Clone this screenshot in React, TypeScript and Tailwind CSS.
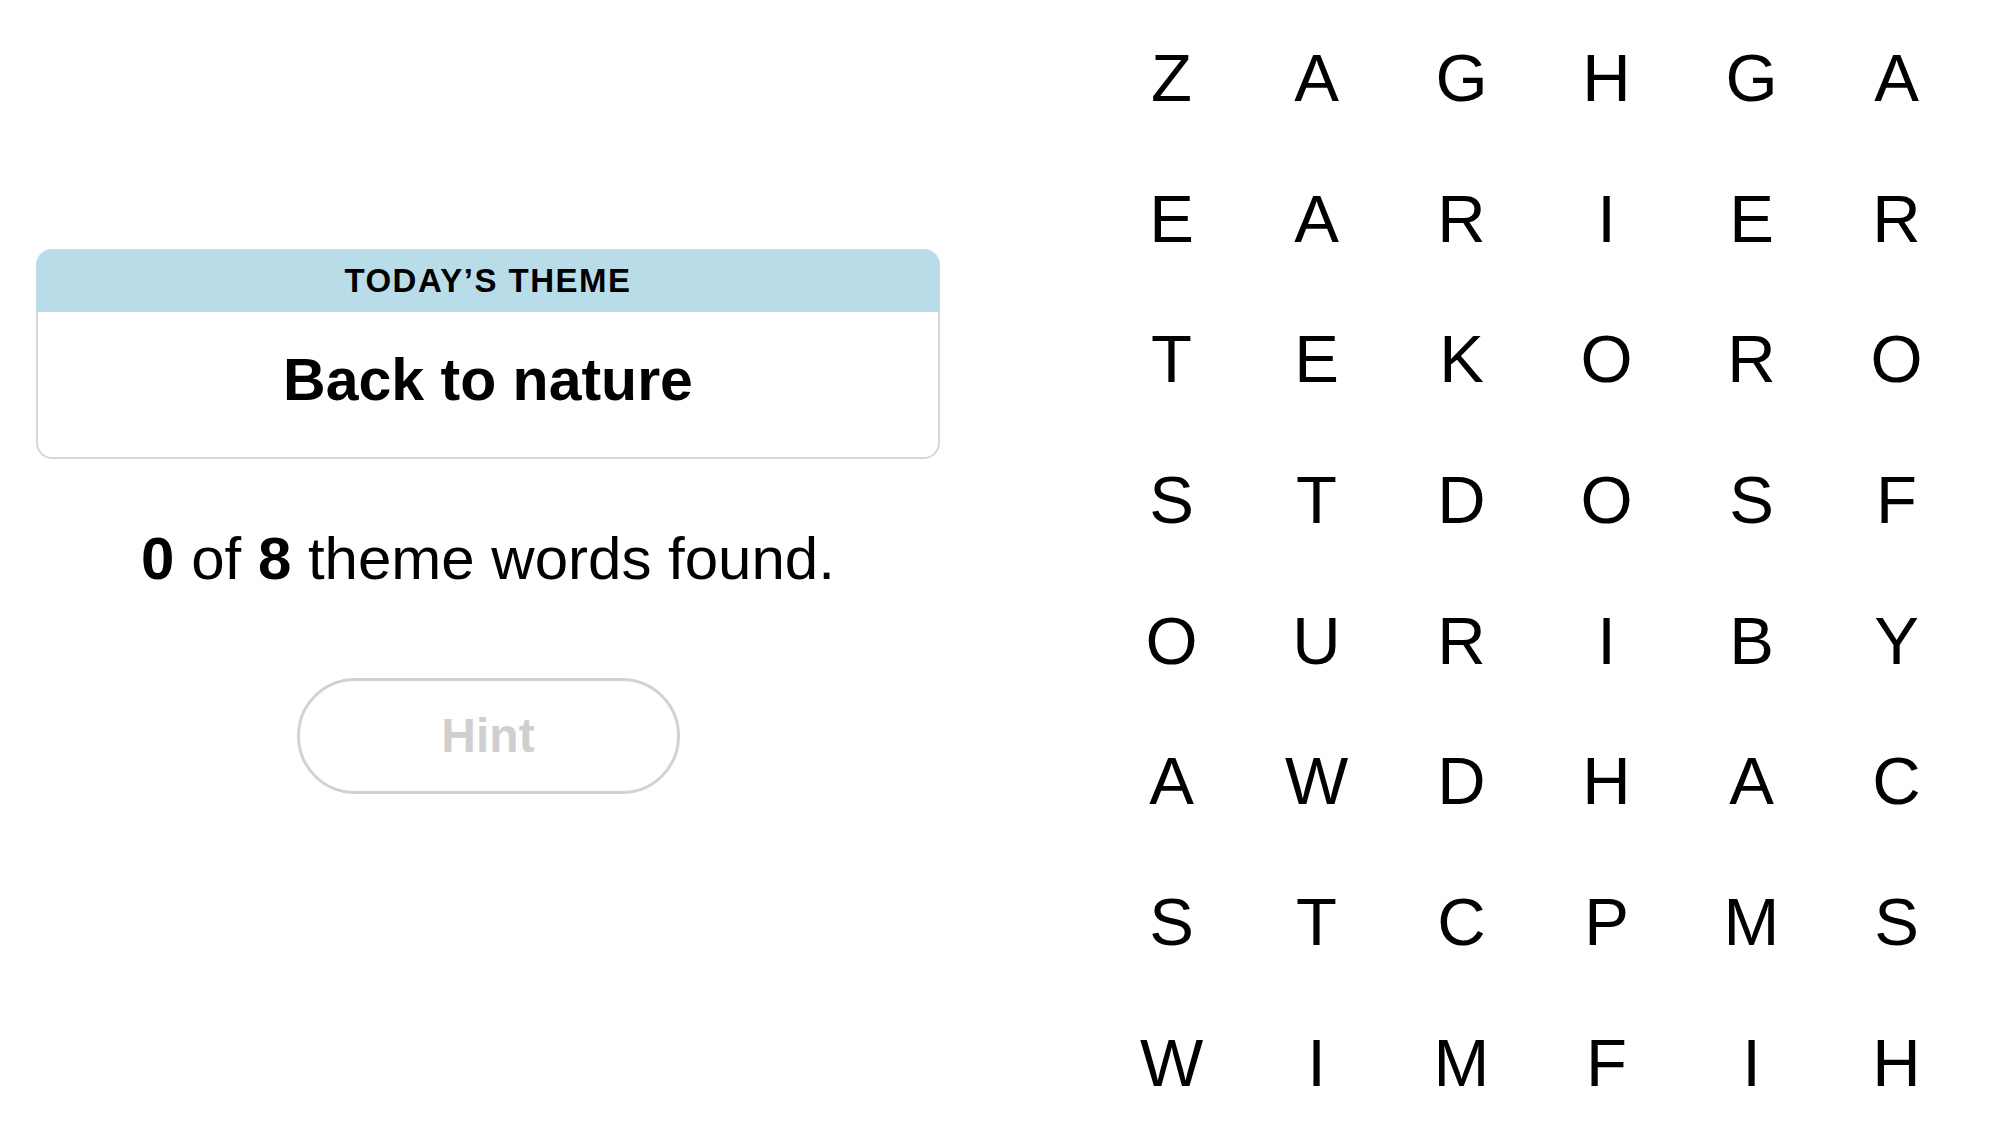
const rows = [
  "ZAGHGA",
  "EARIER",
  "TEKORO",
  "STDOSF",
  "OURIBY",
  "AWDHAC",
  "STCPMS",
  "WIMFIH",
];

function ThemeCard() {
  return (
    <div className="w-full">
      <div className="h-[63px] rounded-t-[16px] bg-[#b8dde9] flex items-center justify-center">
        <span className="text-[33px] leading-none font-bold tracking-[1.5px] text-black">
          TODAY&rsquo;S THEME
        </span>
      </div>
      <div className="h-[147px] box-border border-2 border-t-0 border-[#d8d8d8] rounded-b-[16px] pt-[39px] text-center">
        <span className="text-[59px] leading-none font-bold text-black">Back to nature</span>
      </div>
    </div>
  );
}

function Board() {
  return (
    <div className="grid grid-cols-[repeat(6,145px)] auto-rows-[140.7px] mt-[7px]">
      {rows.map((row, r) =>
        row.split("").map((ch, c) => (
          <div
            key={`${r}-${c}`}
            className="flex items-center justify-center text-[67px] leading-none text-black"
          >
            {ch}
          </div>
        ))
      )}
    </div>
  );
}

export default function App() {
  return (
    <div
      className="w-[2000px] h-[1139px] bg-white flex overflow-hidden"
      style={{ fontFamily: '"Liberation Sans", Arial, sans-serif' }}
    >
      <div className="w-[976px] px-[36px] pt-[249px] flex flex-col items-center">
        <ThemeCard />
        <p className="mt-[70px] text-[60px] leading-none text-black">
          <b>0</b> of <b>8</b> theme words found.
        </p>
        <button
          type="button"
          disabled
          className="mt-[89px] w-[383px] h-[116px] rounded-full border-[3px] border-[#d2d2d2] bg-white text-[48px] font-bold text-[#cfcfcf] leading-none"
        >
          Hint
        </button>
      </div>
      <div className="ml-[123px]">
        <Board />
      </div>
    </div>
  );
}
